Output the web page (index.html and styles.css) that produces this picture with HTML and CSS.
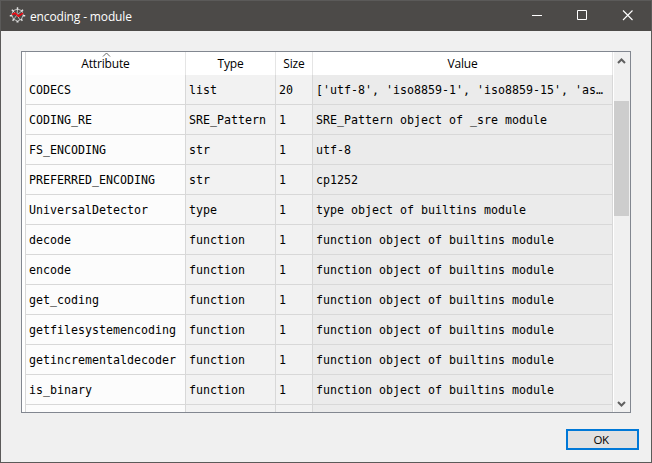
FILE: index.html
```html
<!DOCTYPE html>
<html lang="en">
<head>
<meta charset="utf-8">
<title>encoding - module</title>
<link rel="stylesheet" href="styles.css">
</head>
<body>
<div class="window">
  <header class="titlebar">
    <svg class="logo" width="17" height="16" viewBox="0 0 17 16" fill="none">
      <path d="M8.5 2 12.8 3.7 14.2 8 12.5 12.3 8.5 14 4.5 12.3 2.8 8 4.2 3.7ZM8.5 2 8 8 11 13M4 4 8 8 4.5 12.5M13 3.7 8 8" stroke="#bdbdbc" stroke-width="1"/>
      <path d="M8.5 .2V2.8M2.8 2.8 4.8 4.6M14 2.8 12.3 4.6M.8 8.8H3M16.2 8.8H14M3.6 13.8 5 12M13.4 13.8 12 12M7.5 14.7H9.5" stroke="#e2e2e2" stroke-width="1.4"/>
      <path d="M3 7.5 6 6.2 9.5 9.2 14 6.2" stroke="#f20812" stroke-width="1.6"/>
    </svg>
    <span class="title">encoding - module</span>
    <div class="controls">
      <svg width="45" height="30"><path d="M17 14.5H27" stroke="#fff"/></svg>
      <svg width="45" height="30"><path d="M17.5 9.5H26.5V18.5H17.5Z" stroke="#fff" fill="none"/></svg>
      <svg width="46" height="30"><path d="M18 9.5 27.5 19M27.5 9.5 18 19" stroke="#fff" stroke-width="1.1"/></svg>
    </div>
  </header>
  <main class="frame">
    <div class="table">
      <div class="row head">
        <div class="cell sorted"><svg class="sort" width="9" height="5"><path d="M1 4.5 4.5 1 8 4.5" stroke="#666" fill="none"/></svg><span>Attribute</span></div><div class="cell">Type</div><div class="cell">Size</div><div class="cell">Value</div>
      </div>
      <div class="row"><div class="cell">CODECS</div><div class="cell">list</div><div class="cell">20</div><div class="cell">['utf-8', 'iso8859-1', 'iso8859-15', 'as…</div></div>
      <div class="row"><div class="cell">CODING_RE</div><div class="cell">SRE_Pattern</div><div class="cell">1</div><div class="cell">SRE_Pattern object of _sre module</div></div>
      <div class="row"><div class="cell">FS_ENCODING</div><div class="cell">str</div><div class="cell">1</div><div class="cell">utf-8</div></div>
      <div class="row"><div class="cell">PREFERRED_ENCODING</div><div class="cell">str</div><div class="cell">1</div><div class="cell">cp1252</div></div>
      <div class="row"><div class="cell">UniversalDetector</div><div class="cell">type</div><div class="cell">1</div><div class="cell">type object of builtins module</div></div>
      <div class="row"><div class="cell">decode</div><div class="cell">function</div><div class="cell">1</div><div class="cell">function object of builtins module</div></div>
      <div class="row"><div class="cell">encode</div><div class="cell">function</div><div class="cell">1</div><div class="cell">function object of builtins module</div></div>
      <div class="row"><div class="cell">get_coding</div><div class="cell">function</div><div class="cell">1</div><div class="cell">function object of builtins module</div></div>
      <div class="row"><div class="cell">getfilesystemencoding</div><div class="cell">function</div><div class="cell">1</div><div class="cell">function object of builtins module</div></div>
      <div class="row"><div class="cell">getincrementaldecoder</div><div class="cell">function</div><div class="cell">1</div><div class="cell">function object of builtins module</div></div>
      <div class="row"><div class="cell">is_binary</div><div class="cell">function</div><div class="cell">1</div><div class="cell">function object of builtins module</div></div>
      <div class="row"><div class="cell"></div><div class="cell"></div><div class="cell"></div><div class="cell"></div></div>
    </div>
    <div class="scrollbar">
      <svg width="15" height="17"><path d="M4 11 7.5 7.5 11 11" stroke="#606060" stroke-width="2" fill="none"/></svg>
      <div class="track"><div class="thumb"></div></div>
      <svg width="15" height="17"><path d="M4 7 7.5 10.5 11 7" stroke="#606060" stroke-width="2" fill="none"/></svg>
    </div>
  </main>
  <footer class="footer"><button class="ok">OK</button></footer>
</div>
</body>
</html>
```
FILE: styles.css
```css
* { box-sizing: border-box; }
body { margin: 0; overflow: hidden; }
svg { display: block; flex: none; }
.window {
  width: 652px;
  height: 463px;
  background: #f0f0f0;
  border: 1px solid #5b5a59;
  display: flex;
  flex-direction: column;
  font: 12px "Open Sans", "Noto Sans", sans-serif;
  color: #000;
}
.titlebar {
  height: 30px;
  flex: none;
  background: #4c4a48;
  color: #fff;
  display: flex;
  align-items: center;
  padding-left: 8px;
}
.logo { margin-bottom: 2px; }
.title { margin-left: 4px; font-size: 12px; letter-spacing: -0.14px; white-space: nowrap; }
.controls { display: flex; margin-left: auto; }
.frame {
  margin: 20px 20px 0;
  height: 362px;
  flex: none;
  border: 1px solid #828790;
  background: #fff;
  display: flex;
  overflow: hidden;
}
.table { width: 588px; margin-left: 3px; border-left: 1px solid #d8d8d8; }
.row {
  display: grid;
  grid-template-columns: 160px 90px 37px 300px;
  height: 30px;
  font: 11.63px/29px "DejaVu Sans Mono", monospace;
}
.cell {
  background: #f2f2f2;
  border-right: 1px solid #d8d8d8;
  border-bottom: 1px solid #d8d8d8;
  padding: 1px 0 0 3px;
  white-space: pre;
  overflow: hidden;
}
.cell:first-child { background: #fcfcfc; }
.cell:last-child { background: #ebebeb; }
.row.head { height: 23px; font: 12px/23px "Open Sans", "Noto Sans", sans-serif; letter-spacing: -0.15px; }
.head .cell, .head .cell:first-child, .head .cell:last-child {
  background: #fff;
  border-bottom: 0;
  border-right-color: #e5e5e5;
  padding: 0;
  text-align: center;
}
.sorted { position: relative; }
.sort { position: absolute; left: 76px; top: 0; }
.scrollbar {
  width: 16px;
  margin-left: 1px;
  background: #f0f0f0;
  display: flex;
  flex-direction: column;
}
.track { flex: 1; padding-top: 32px; }
.thumb { width: 15px; height: 115px; background: #cdcdcd; }
.footer { display: flex; justify-content: flex-end; padding: 16px 12px 0 0; }
.ok {
  width: 73px;
  height: 21px;
  padding: 1px 3px 0 0;
  background: #e1e1e1;
  border: 2px solid #0078d7;
  font: 11.5px/16px "Open Sans", "Noto Sans", sans-serif;
  letter-spacing: -0.5px;
}
```
